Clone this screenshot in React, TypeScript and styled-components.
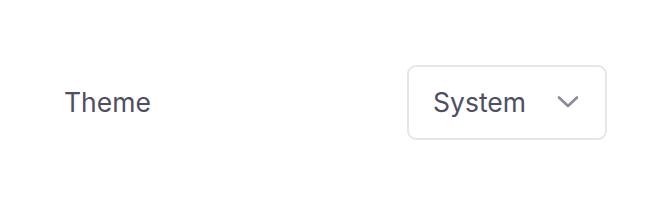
import React, { useState } from 'react';
import styled, { createGlobalStyle } from 'styled-components';

const GlobalStyle = createGlobalStyle`
  html, body {
    margin: 0;
    padding: 0;
    background: #ffffff;
    font-family: Inter, "Noto Sans", sans-serif;
  }
`;

const Page = styled.div`
  height: 204px;
  display: flex;
  align-items: center;
`;

const SettingRow = styled.div`
  flex: 1;
  display: flex;
  align-items: center;
  justify-content: space-between;
  padding: 0 65px 0 64px;
`;

const Label = styled.span`
  font-size: 26.5px;
  color: #4f4e61;
`;

const SelectButton = styled.button`
  width: 200px;
  height: 75px;
  box-sizing: border-box;
  display: flex;
  align-items: center;
  justify-content: space-between;
  padding: 0 26px 0 24px;
  background: #ffffff;
  border: 2px solid #e6e6ea;
  border-radius: 9px;
  font-family: inherit;
  font-size: 26.5px;
  color: #4f4e61;
  cursor: pointer;
`;

const Chevron = () => (
  <svg width="22" height="14" viewBox="0 0 22 14" fill="none">
    <path d="M2 2.5L11 11L20 2.5" stroke="#8b8a9b" strokeWidth="2.6" strokeLinecap="round" strokeLinejoin="round" />
  </svg>
);

const App: React.FC = () => {
  const [theme] = useState('System');

  return (
    <>
      <GlobalStyle />
      <Page>
        <SettingRow>
          <Label>Theme</Label>
          <SelectButton>
            {theme}
            <Chevron />
          </SelectButton>
        </SettingRow>
      </Page>
    </>
  );
};

export default App;
